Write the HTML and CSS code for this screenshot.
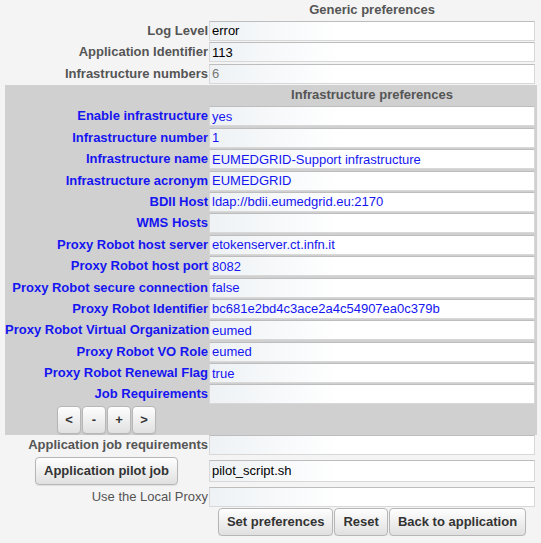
FILE: index.html
```html
<!DOCTYPE html>
<html>
<head>
<meta charset="utf-8">
<title>Preferences</title>
<link rel="stylesheet" href="styles.css">
</head>
<body>
<form class="page">
  <div class="grid generic">
    <div class="head">Generic preferences</div>
    <label class="label">Log Level</label><input class="field" type="text" value="error">
    <label class="label">Application Identifier</label><input class="field" type="text" value="113">
    <label class="label">Infrastructure numbers</label><input class="field dim" type="text" value="6">
  </div>
  <div class="grid infra">
    <div class="head">Infrastructure preferences</div>
    <label class="label">Enable infrastructure</label><input class="field" type="text" value="yes">
    <label class="label">Infrastructure number</label><input class="field" type="text" value="1">
    <label class="label">Infrastructure name</label><input class="field" type="text" value="EUMEDGRID-Support infrastructure">
    <label class="label">Infrastructure acronym</label><input class="field" type="text" value="EUMEDGRID">
    <label class="label">BDII Host</label><input class="field" type="text" value="ldap://bdii.eumedgrid.eu:2170">
    <label class="label">WMS Hosts</label><input class="field" type="text" value="">
    <label class="label">Proxy Robot host server</label><input class="field" type="text" value="etokenserver.ct.infn.it">
    <label class="label">Proxy Robot host port</label><input class="field" type="text" value="8082">
    <label class="label">Proxy Robot secure connection</label><input class="field" type="text" value="false">
    <label class="label">Proxy Robot Identifier</label><input class="field" type="text" value="bc681e2bd4c3ace2a4c54907ea0c379b">
    <label class="label">Proxy Robot Virtual Organization</label><input class="field" type="text" value="eumed">
    <label class="label">Proxy Robot VO Role</label><input class="field" type="text" value="eumed">
    <label class="label">Proxy Robot Renewal Flag</label><input class="field" type="text" value="true">
    <label class="label">Job Requirements</label><input class="field" type="text" value="">
    <div class="nav">
      <button type="button" class="btn small">&lt;</button>
      <button type="button" class="btn small">-</button>
      <button type="button" class="btn small">+</button>
      <button type="button" class="btn small">&gt;</button>
    </div>
  </div>
  <div class="grid bottom">
    <label class="label">Application job requirements</label><input class="field" type="text" value="">
    <div class="center"><button type="button" class="btn pilot">Application pilot job</button></div>
    <input class="field tall" type="text" value="pilot_script.sh">
    <label class="label normal">Use the Local Proxy</label><input class="field" type="text" value="">
    <div class="actions">
      <button type="button" class="btn">Set preferences</button>
      <button type="button" class="btn">Reset</button>
      <button type="button" class="btn">Back to application</button>
    </div>
  </div>
</form>
</body>
</html>
```

FILE: styles.css
```css
body {
  margin: 0;
  background: #f4f4f4;
  font-family: "Liberation Sans", Arial, sans-serif;
  font-size: 13px;
}

.page {
  padding: 0 4px 0 5px;
  margin: 0;
}

.grid {
  display: grid;
  grid-template-columns: 203px 1fr;
  column-gap: 1px;
  padding-right: 2px;
}

.generic {
  grid-template-rows: 19px repeat(3, 20px);
  row-gap: 1.5px;
}

.infra {
  background: #d0d0d0;
  margin-top: 1.5px;
  grid-template-rows: 20px repeat(14, 20px) 28px;
  row-gap: 1.4px;
  padding-bottom: 1px;
}

.bottom {
  grid-template-rows: 20px 30px 20px 28px;
  row-gap: 1px;
}

.head {
  grid-column: 2;
  text-align: center;
  font-weight: bold;
  color: #555;
  line-height: 19px;
}

.label {
  text-align: right;
  font-weight: bold;
  color: #555;
  line-height: 19px;
  white-space: nowrap;
}

.label.normal {
  font-weight: normal;
}

.infra .label {
  color: #1515f0;
}

.field {
  box-sizing: border-box;
  width: 100%;
  height: 20px;
  margin: 0;
  padding: 0 2px;
  border: 1px solid #d8d8d8;
  border-top-color: #bdbdbd;
  border-radius: 0;
  background: linear-gradient(to right, #eef2f5, #ffffff 40%);
  font-family: "Liberation Sans", Arial, sans-serif;
  font-size: 13px;
  color: #000;
  outline: none;
}

.field.dim {
  color: #777;
}

.infra .field {
  color: #1515f0;
}

.field.tall {
  height: 22px;
  align-self: center;
}

.nav {
  grid-column: 1;
  display: flex;
  justify-content: center;
  gap: 1px;
}

.center {
  display: flex;
  justify-content: center;
  align-items: center;
}

.actions {
  grid-column: 2;
  display: flex;
  justify-content: center;
  gap: 1px;
}

.btn {
  height: 28px;
  margin: 0;
  padding: 0 8px;
  border: 1px solid #b6b6b6;
  border-radius: 4px;
  background: linear-gradient(#fefefe, #e0e0e0);
  box-shadow: 0 1px 1px rgba(0, 0, 0, 0.08);
  font-family: "Liberation Sans", Arial, sans-serif;
  font-size: 13px;
  font-weight: bold;
  color: #333;
  cursor: pointer;
}

.btn.small {
  width: 24px;
  padding: 0;
}

.btn.pilot {
  width: 143px;
  padding: 0;
}
```
